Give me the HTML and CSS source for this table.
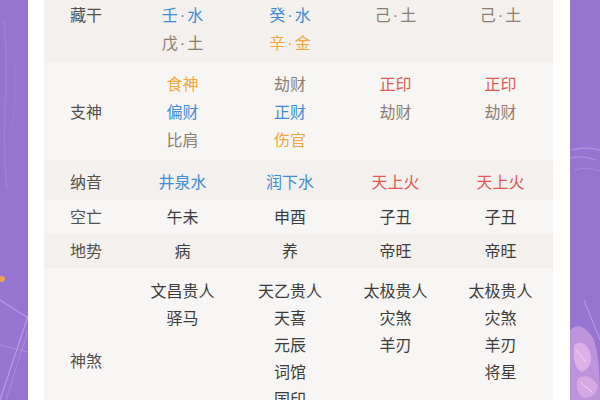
FILE: index.html
```html
<!DOCTYPE html>
<html lang="zh-CN">
<head>
<meta charset="utf-8">
<title>八字排盘</title>
<link rel="stylesheet" href="styles.css">
</head>
<body>
<div class="page">
  <div class="side side-left">
    <svg class="deco" width="28" height="400" viewBox="0 0 28 400">
      <path d="M4 20 Q8 60 5 110 Q3 150 7 190" stroke="#a98bd9" stroke-width="2" fill="none" opacity="0.5"/>
      <path d="M14 60 Q18 90 12 130" stroke="#a387d6" stroke-width="1.5" fill="none" opacity="0.4"/>
      <circle cx="2" cy="279" r="3" fill="#e8a35a"/>
      <path d="M0 300 L28 318" stroke="#b69be6" stroke-width="1.2" fill="none"/>
      <path d="M28 316 L0 400" stroke="#b69be6" stroke-width="1.2" fill="none"/>
      <path d="M0 345 L28 352" stroke="#ad90e0" stroke-width="1" fill="none"/>
      <path d="M6 400 L28 330" stroke="#a98be0" stroke-width="1" fill="none"/>
    </svg>
  </div>
  <div class="gap"></div>
  <div class="table">
    <div class="row row-dark">
      <div class="label">藏干</div>
      <div class="cell"><span class="gold">庚<i class="dot">·</i>金</span><span class="blue">壬<i class="dot">·</i>水</span><span class="brown">戊<i class="dot">·</i>土</span></div>
      <div class="cell"><span class="brown">己<i class="dot">·</i>土</span><span class="blue">癸<i class="dot">·</i>水</span><span class="gold">辛<i class="dot">·</i>金</span></div>
      <div class="cell"><span class="red">丁<i class="dot">·</i>火</span><span class="brown">己<i class="dot">·</i>土</span></div>
      <div class="cell"><span class="red">丁<i class="dot">·</i>火</span><span class="brown">己<i class="dot">·</i>土</span></div>
    </div>
    <div class="row row-light">
      <div class="label">支神</div>
      <div class="cell"><span class="gold">食神</span><span class="blue">偏财</span><span class="brown">比肩</span></div>
      <div class="cell"><span class="brown">劫财</span><span class="blue">正财</span><span class="gold">伤官</span></div>
      <div class="cell"><span class="red">正印</span><span class="brown">劫财</span></div>
      <div class="cell"><span class="red">正印</span><span class="brown">劫财</span></div>
    </div>
    <div class="row row-dark row-nayin">
      <div class="label">纳音</div>
      <div class="cell"><span class="blue">井泉水</span></div>
      <div class="cell"><span class="blue">润下水</span></div>
      <div class="cell"><span class="red">天上火</span></div>
      <div class="cell"><span class="red">天上火</span></div>
    </div>
    <div class="row row-light row-sm">
      <div class="label">空亡</div>
      <div class="cell"><span>午未</span></div>
      <div class="cell"><span>申酉</span></div>
      <div class="cell"><span>子丑</span></div>
      <div class="cell"><span>子丑</span></div>
    </div>
    <div class="row row-dark row-sm2">
      <div class="label">地势</div>
      <div class="cell"><span>病</span></div>
      <div class="cell"><span>养</span></div>
      <div class="cell"><span>帝旺</span></div>
      <div class="cell"><span>帝旺</span></div>
    </div>
    <div class="row row-light row-shensha">
      <div class="label">神煞</div>
      <div class="cell"><span>文昌贵人</span><span>驿马</span></div>
      <div class="cell"><span>天乙贵人</span><span>天喜</span><span>元辰</span><span>词馆</span><span>国印</span></div>
      <div class="cell"><span>太极贵人</span><span>灾煞</span><span>羊刃</span></div>
      <div class="cell"><span>太极贵人</span><span>灾煞</span><span>羊刃</span><span>将星</span></div>
    </div>
  </div>
  <div class="gap"></div>
  <div class="side side-right">
    <svg class="deco" width="30" height="400" viewBox="0 0 30 400">
      <path d="M2 150 Q14 146 30 150" stroke="#ae92df" stroke-width="1.5" fill="none"/>
      <path d="M0 158 Q12 155 26 160" stroke="#ae92df" stroke-width="1.2" fill="none"/>
      <path d="M4 170 Q16 166 30 171" stroke="#a78ada" stroke-width="1" fill="none"/>
      <path d="M14 300 L30 340" stroke="#b9a0e6" stroke-width="1" fill="none"/>
      <path d="M0 330 Q10 320 22 336 Q30 350 30 400 L0 400 Z" fill="#c79fe0" opacity="0.75"/>
      <path d="M4 345 Q14 338 20 352 Q24 366 12 372 Q2 368 4 345 Z" fill="#e4b8ea" opacity="0.8"/>
      <path d="M8 378 Q20 372 28 386 Q26 398 14 398 Q4 392 8 378 Z" fill="#dcaee6" opacity="0.8"/>
      <path d="M6 350 L16 362 M10 382 L22 392" stroke="#f1d4f2" stroke-width="1" fill="none"/>
    </svg>
  </div>
</div>
</body>
</html>
```

FILE: styles.css
```css
html, body {
  margin: 0;
  padding: 0;
  background: #ffffff;
}

body {
  font-family: "Noto Sans CJK SC", "Noto Sans", sans-serif;
  font-size: 16px;
  color: #3c3c3c;
}

.page {
  width: 600px;
  height: 400px;
  overflow: hidden;
  display: grid;
  grid-template-columns: 28px 16px 509px 17px 30px;
  align-items: start;
}

.side {
  height: 400px;
  background: #9674cf;
  overflow: hidden;
}

.deco {
  display: block;
}

.gap {
  height: 400px;
  background: #ffffff;
}

.table {
  margin-top: -34px;
  display: flex;
  flex-direction: column;
}

.row {
  display: grid;
  grid-template-columns: 84px 109px 106px 105px 105px;
  padding: 6px 0 7px;
}

.row-dark {
  background: #f3f0ed;
}

.row-light {
  background: #f8f6f4;
}

.row-nayin {
  padding: 7px 0 5px;
}

.row-sm {
  padding: 2px 0 3px;
}

.row-sm2 {
  padding: 3px 0 4px;
}

.row-shensha {
  padding: 0;
  min-height: 184px;
}

.row-shensha .cell {
  padding-top: 9px;
  line-height: 27px;
}

.label {
  align-self: center;
  text-align: center;
  color: #505050;
  line-height: 28px;
}

.cell {
  display: flex;
  flex-direction: column;
  align-items: center;
  line-height: 28px;
}

.cell > span {
  height: 28px;
}

.row-shensha .cell > span {
  height: 27px;
}

.dot {
  font-style: normal;
  font-family: "Liberation Sans", sans-serif;
  line-height: 0;
  margin: 0 2px;
}

.blue {
  color: #3f8bd6;
}

.gold {
  color: #efa83a;
}

.red {
  color: #e05a56;
}

.brown {
  color: #8c7f72;
}
```
